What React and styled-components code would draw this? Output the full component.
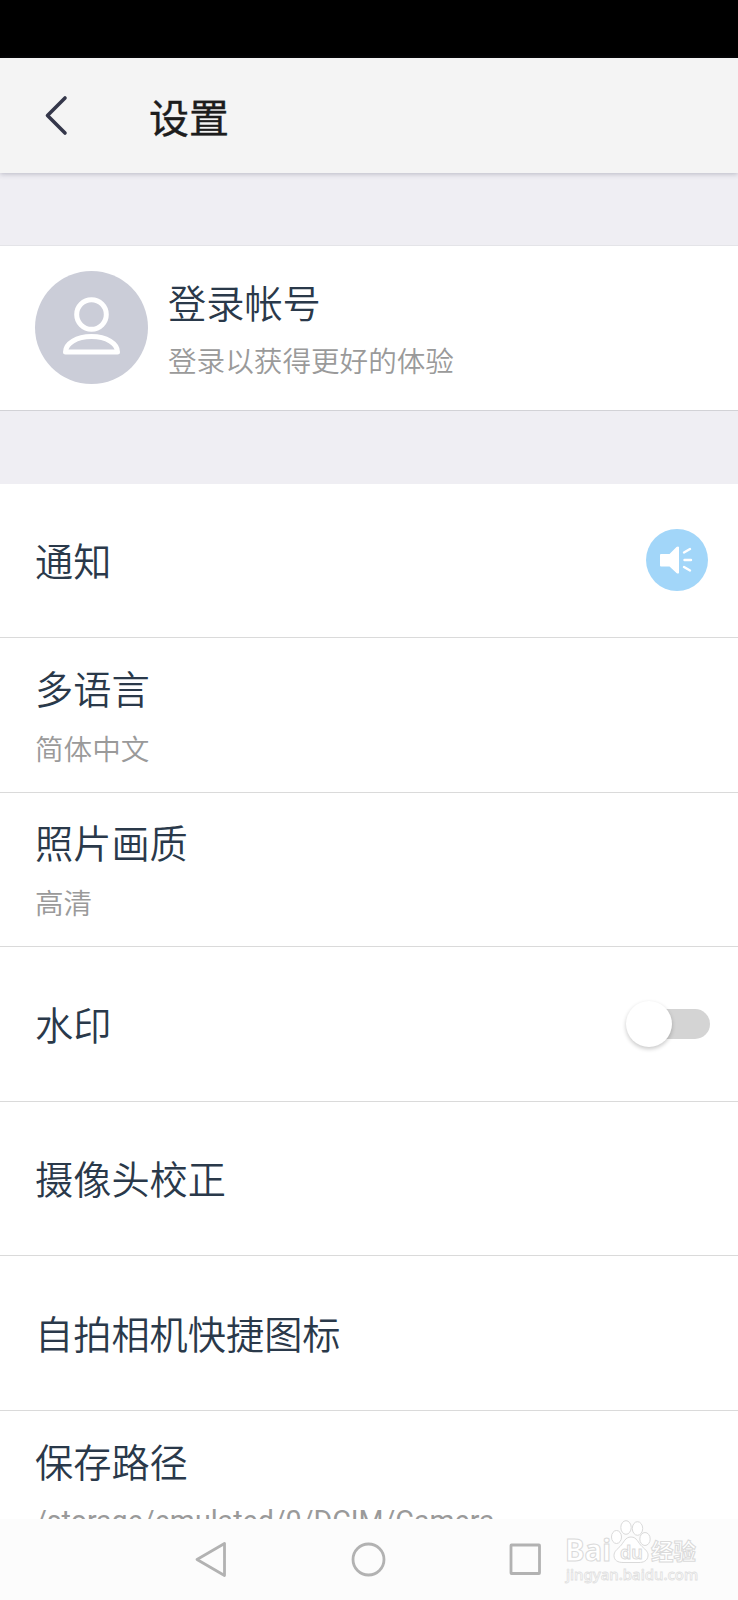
import React, { useState } from 'react';
import styled, { createGlobalStyle } from 'styled-components';

const GlobalStyle = createGlobalStyle`
  * {
    box-sizing: border-box;
  }

  body {
    margin: 0;
    background: #fff;
    font-family: "Noto Sans CJK SC", "Noto Sans", sans-serif;
  }
`;

const Screen = styled.div`
  display: flex;
  flex-direction: column;
  width: 738px;
  height: 1600px;
  overflow: hidden;
  background: #efeef3;
`;

const StatusBar = styled.div`
  flex: none;
  height: 58px;
  background: #000;
`;

const Header = styled.header`
  flex: none;
  display: flex;
  align-items: center;
  height: 115px;
  padding-left: 44px;
  background: #f4f4f4;
  box-shadow: 0 1px 5px rgba(60, 60, 90, 0.3);
  z-index: 1;
`;

const BackButton = styled.button`
  display: flex;
  width: 26px;
  height: 42px;
  margin-right: 79px;
  padding: 0;
  border: none;
  background: none;
`;

const Title = styled.h1`
  margin: 0;
  font-size: 40px;
  line-height: 58px;
  font-weight: 400;
  color: #1d1d1d;
  -webkit-text-stroke: 0.4px #1d1d1d;
`;

const Account = styled.section`
  flex: none;
  display: flex;
  align-items: center;
  height: 166px;
  margin: 72px 0 73px;
  padding: 0 0 1px 35px;
  border-top: 1px solid #e4e4e8;
  border-bottom: 1px solid #d2d2d6;
  background: #fff;
`;

const Avatar = styled.div`
  width: 113px;
  height: 113px;
  margin-right: 20px;
  border-radius: 50%;
  background: #cbcdd8;
`;

const TextBlock = styled.div`
  flex: 1;
  display: flex;
  flex-direction: column;
  gap: ${(props) => props.$gap}px;
`;

const Label = styled.div`
  font-size: 38.2px;
  line-height: 54px;
  font-weight: 350;
  color: #2a394a;
  white-space: nowrap;
`;

const SubLabel = styled.div`
  font-family: ${(props) => (props.$latin ? 'Roboto, sans-serif' : 'inherit')};
  font-size: 28.6px;
  line-height: 40px;
  font-weight: ${(props) => (props.$latin ? 400 : 350)};
  color: #9a9a9a;
  white-space: nowrap;
`;

const List = styled.section`
  flex: 1;
  min-height: 0;
  display: grid;
  grid-template-rows: 154px 155px 154px 155px 154px 155px 155px;
  overflow: hidden;
  background: #fff;
`;

const Row = styled.div`
  display: flex;
  align-items: center;
  padding: 0 28px ${(props) => (props.$double ? 2 : 1)}px 35px;
  border-bottom: 1px solid #dadada;
`;

const SoundBadge = styled.div`
  width: 62px;
  height: 62px;
  margin-right: 2px;
  border-radius: 50%;
  background: #a2d6f9;
`;

const Track = styled.button`
  display: flex;
  align-items: center;
  justify-content: ${(props) => (props.$on ? 'flex-end' : 'flex-start')};
  width: 80px;
  height: 30px;
  padding: 0;
  border: none;
  border-radius: 15px;
  background: ${(props) => (props.$on ? '#a2d6f9' : '#d4d4d4')};
`;

const Knob = styled.span`
  flex: none;
  width: 46px;
  height: 46px;
  margin-left: -4px;
  border-radius: 50%;
  background: #fff;
  box-shadow: 0 2px 4px rgba(0, 0, 0, 0.22);
`;

const NavBar = styled.nav`
  position: relative;
  flex: none;
  display: flex;
  align-items: center;
  justify-content: center;
  gap: 120px;
  height: 81px;
  padding-right: 1px;
  background: #fcfcfc;
`;

const NavIcon = styled.svg`
  display: block;
  width: 37px;
  height: 37px;
  fill: none;
  stroke: #b2b2b2;
  stroke-width: 2.8;
  stroke-linejoin: round;
`;

const Watermark = styled.div`
  position: absolute;
  left: 565px;
  top: 0;
  width: 136px;
  color: #fff;
  font-family: "Noto Sans", "Noto Sans CJK SC", sans-serif;
  font-weight: 700;
  -webkit-text-stroke: 1px #dadada;
`;

const Brand = styled.div`
  display: flex;
  align-items: flex-end;
  height: 46px;
`;

const BrandText = styled.span`
  width: ${(props) => props.$width}px;
  font-family: ${(props) => (props.$cjk ? '"Noto Sans CJK SC", sans-serif' : '"Noto Sans", sans-serif')};
  font-size: ${(props) => props.$size}px;
  line-height: 30px;
  white-space: nowrap;
`;

const Paw = styled.svg`
  flex: none;
  width: 40px;
  height: 46px;
  fill: #fff;
  stroke: #dadada;
  stroke-width: 1;
`;

const PawText = styled.text`
  font-family: "Noto Sans", sans-serif;
  font-size: 18px;
  font-weight: 600;
`;

const Site = styled.div`
  padding-left: 1px;
  font-size: 15px;
  line-height: 18px;
  font-weight: 500;
  white-space: nowrap;
  -webkit-text-stroke: 0.8px #e0e0e0;
`;

const BackIcon = () => (
  <svg width="26" height="42" viewBox="0 0 26 42" fill="none" stroke="#34374a" strokeWidth="3.600" strokeLinecap="round" strokeLinejoin="round">
    <path d="M21 3L3.500 20.500l17.500 17.500" />
  </svg>
);

const UserIcon = () => (
  <svg width="113" height="113" viewBox="0 0 113 113" fill="none" stroke="#fff" strokeWidth="5" strokeLinejoin="round">
    <circle cx="56.500" cy="43.500" r="14.800" />
    <path d="M30.500 81c0-8.500 11-15.500 26-15.500s26 7 26 15.500z" />
  </svg>
);

const SpeakerIcon = () => (
  <svg width="62" height="62" viewBox="0 0 62 62" fill="#fff">
    <path d="M15 25h8.500l7-7q1.500-1 2.500 0v26q-1 1-2.500 0l-7-6.500H15q-1 0-1-1v-10.500q0-1 1-1z" />
    <path d="M38 23.500l6-3.500M38.500 31h6.500M38 38l6 3.500" stroke="#fff" strokeWidth="2.400" strokeLinecap="round" />
  </svg>
);

const BaiduWatermark = () => (
  <Watermark>
    <Brand>
      <BrandText $width={46} $size={29.5}>Bai</BrandText>
      <Paw viewBox="0 0 40 46">
        <path d="M20 18c6 0 7 6 11 9.500 4 3.500 6.500 6 6 9.500-.5 5-5 6.500-9 6.500H12c-5 0-9-2-9-7 0-4 3-6 6-9 4-4 5-9.500 11-9.500z" />
        <ellipse cx="5.500" cy="18" rx="5" ry="6.500" />
        <ellipse cx="15" cy="8.500" rx="5.200" ry="6.800" />
        <ellipse cx="26.500" cy="9.500" rx="5.200" ry="6.800" />
        <ellipse cx="34" cy="20" rx="5.200" ry="6.500" />
        <PawText x="9" y="39.500">du</PawText>
      </Paw>
      <BrandText $width={46} $size={22.5} $cjk>经验</BrandText>
    </Brand>
    <Site>jingyan.baidu.com</Site>
  </Watermark>
);

const SettingRow = ({ label, value, latin, children }) => (
  <Row $double={Boolean(value)}>
    <TextBlock $gap={13}>
      <Label>{label}</Label>
      {value && <SubLabel $latin={latin}>{value}</SubLabel>}
    </TextBlock>
    {children}
  </Row>
);

const App = () => {
  const [watermark, setWatermark] = useState(false);

  return (
    <Screen>
      <GlobalStyle />
      <StatusBar />
      <Header>
        <BackButton aria-label="返回"><BackIcon /></BackButton>
        <Title>设置</Title>
      </Header>
      <Account>
        <Avatar><UserIcon /></Avatar>
        <TextBlock $gap={11}>
          <Label>登录帐号</Label>
          <SubLabel>登录以获得更好的体验</SubLabel>
        </TextBlock>
      </Account>
      <List>
        <SettingRow label="通知">
          <SoundBadge><SpeakerIcon /></SoundBadge>
        </SettingRow>
        <SettingRow label="多语言" value="简体中文" />
        <SettingRow label="照片画质" value="高清" />
        <SettingRow label="水印">
          <Track $on={watermark} onClick={() => setWatermark(!watermark)} aria-label="水印">
            <Knob />
          </Track>
        </SettingRow>
        <SettingRow label="摄像头校正" />
        <SettingRow label="自拍相机快捷图标" />
        <SettingRow label="保存路径" value="/storage/emulated/0/DCIM/Camera" latin />
      </List>
      <NavBar>
        <NavIcon viewBox="0 0 37 37"><path d="M4 18.500L31.500 2.500v32z" /></NavIcon>
        <NavIcon viewBox="0 0 37 37"><circle cx="18.500" cy="18.500" r="15.500" /></NavIcon>
        <NavIcon viewBox="0 0 37 37"><rect x="4" y="4" width="28.500" height="28.500" rx="0.500" /></NavIcon>
        <BaiduWatermark />
      </NavBar>
    </Screen>
  );
};

export default App;
